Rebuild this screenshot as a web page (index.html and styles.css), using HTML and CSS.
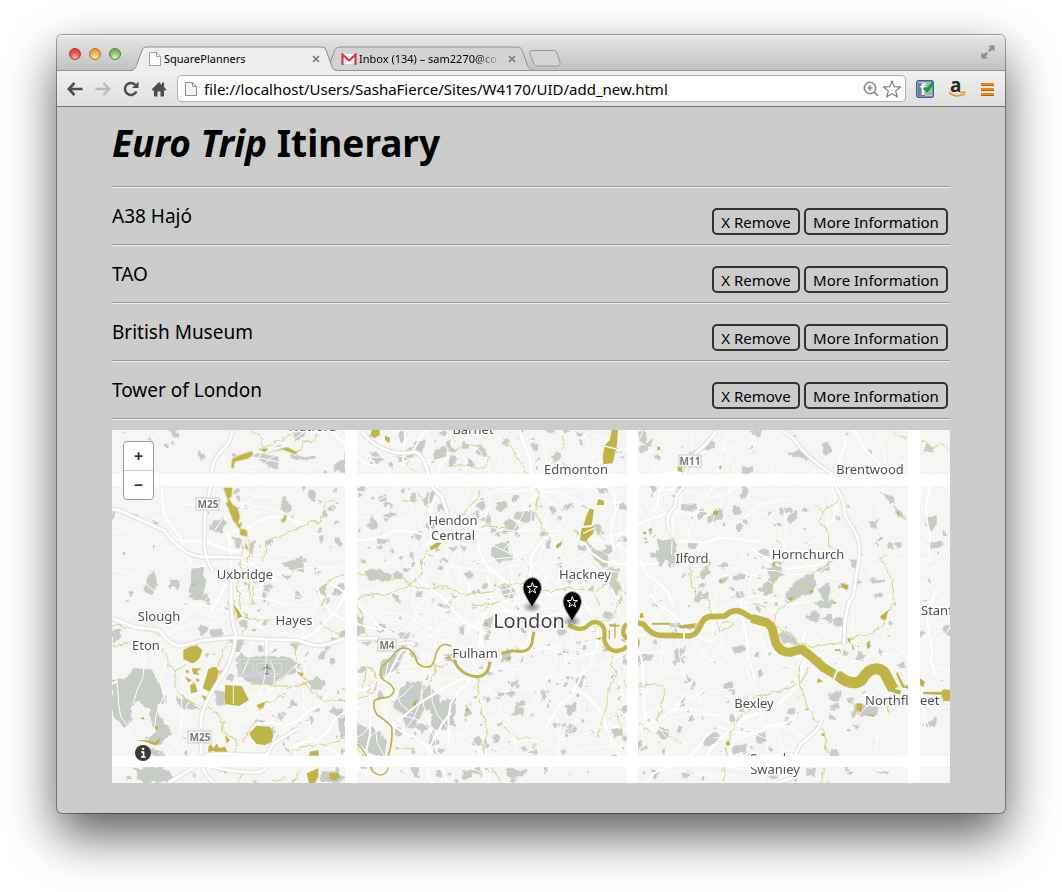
FILE: index.html
```
<!DOCTYPE html>
<html lang="en">
<head>
<meta charset="utf-8">
<title>SquarePlanners</title>
<link rel="stylesheet" href="styles.css">
</head>
<body>
<div class="window">
  <header class="tabstrip">
    <div class="lights">
      <button class="light light-red" aria-label="Close window"></button>
      <button class="light light-amber" aria-label="Minimise window"></button>
      <button class="light light-green" aria-label="Zoom window"></button>
    </div>
    <div class="tab tab-active">
      <svg class="tab-shape" viewBox="0 0 204 25" preserveAspectRatio="none"><path d="M0 25C4 23 4 20 5 18L10 4Q11 1 14 1H190Q193 1 194 4L199 18C200 21 200 23 204 25Z" fill="#eeeeee"/><path d="M0 24C4 23 4 20 5 18L10 4Q11 1 14 1H190Q193 1 194 4L199 18C200 21 200 23 204 24" fill="none" stroke="#8f8f8f"/></svg>
      <svg class="page-icon" viewBox="0 0 12 14"><path d="M.5.5H7.500L11.500 4.500V13.500H.5Z" fill="#fafafa" stroke="#a0a0a0"/><path d="M7.500.5V4.500H11.500" fill="none" stroke="#a0a0a0"/></svg>
      <span class="tab-title">SquarePlanners</span>
      <button class="tab-close" aria-label="Close tab"><svg viewBox="0 0 8 8"><path d="M1 1L7 7M7 1L1 7" stroke="#777" stroke-width="1.600"/></svg></button>
    </div>
    <div class="tab tab-back">
      <svg class="tab-shape" viewBox="0 0 204 25" preserveAspectRatio="none"><path d="M2 18L7 4Q8 1 11 1H188Q191 1 192 4L197 18C198 21 199 23 203 24H4Z" fill="#d3d3d3"/><path d="M0 17L5 4Q6 1 10 1H188Q191 1 192 4L197 18C198 21 199 23 203 24" fill="none" stroke="#939393"/></svg>
      <svg class="mail-icon" viewBox="0 0 16 12"><path d="M1 1H15V11H1Z" fill="#fff"/><path d="M1.500 12V1.500L8 7.500L14.500 1.500V12" fill="none" stroke="#d93a3a" stroke-width="2.200"/><path d="M3.500 11L6.500 7M12.500 11L9.500 7" stroke="#e8a9a6" stroke-width=".7"/></svg>
      <span class="tab-title tab-title-fade">Inbox (134) – sam2270@co</span>
      <button class="tab-close" aria-label="Close tab"><svg viewBox="0 0 8 8"><path d="M1 1L7 7M7 1L1 7" stroke="#777" stroke-width="1.600"/></svg></button>
    </div>
    <button class="new-tab" aria-label="New tab"><svg viewBox="0 0 32 17"><path d="M3 .5H25Q27 .5 28 3L31 12Q32 16 29 16H9Q6 16 5 14L1 4Q0 .5 3 .5Z" fill="#d5d5d5" stroke="#999"/></svg></button>
    <button class="fullscreen" aria-label="Full screen"><svg viewBox="0 0 15 15"><path d="M8 .5H14.500V7L12 4.800L9.300 7.500L7.500 5.700L10.200 3Z M.5 8L3 10.200L5.700 7.500L7.500 9.300L4.800 12L7 14.500H.5Z" fill="#8b8b8b"/></svg></button>
  </header>

  <nav class="toolbar">
    <button class="tool" aria-label="Back"><svg viewBox="0 0 16 16"><path d="M7.500 2L1.800 8L7.500 14M2 8H15.500" fill="none" stroke="#4d4d4d" stroke-width="2.600"/></svg></button>
    <button class="tool" aria-label="Forward"><svg viewBox="0 0 16 16"><path d="M8.500 2L14.200 8L8.500 14M14 8H.5" fill="none" stroke="#b9b9b9" stroke-width="2.400"/></svg></button>
    <button class="tool" aria-label="Reload"><svg viewBox="0 0 16 16"><path d="M12.500 4A6 6 0 1 0 13.400 10.500" fill="none" stroke="#4d4d4d" stroke-width="2.500"/><path d="M15.500 .5V7H9Z" fill="#4d4d4d"/></svg></button>
    <button class="tool" aria-label="Home"><svg viewBox="0 0 16 16"><path d="M8 1L.5 8.500L1.500 9.500H3V15.500H6.500V10.500H9.500V15.500H13V9.500H14.500L15.500 8.500L13 6V1.500H11V4Z" fill="#4d4d4d"/></svg></button>
    <form class="omnibox">
      <svg class="page-icon" viewBox="0 0 12 14"><path d="M.5.5H7.500L11.500 4.500V13.500H.5Z" fill="#f4f4f4" stroke="#8e8e8e"/><path d="M7.500.5V4.500H11.500" fill="none" stroke="#8e8e8e"/></svg>
      <input class="address" type="text" aria-label="Address" value="file://localhost/Users/SashaFierce/Sites/W4170/UID/add_new.html">
      <svg class="magnifier" viewBox="0 0 16 16"><circle cx="7" cy="7" r="5.700" fill="none" stroke="#8b8b8b" stroke-width="1.600"/><path d="M4.500 7H9.500M7 4.500V9.500M11 11L15 15" stroke="#8b8b8b" stroke-width="1.700"/></svg>
      <button class="star" type="button" aria-label="Bookmark"><svg viewBox="0 0 18 18"><path d="M9 1L11.300 6.600L17.300 7L12.700 10.900L14.200 16.800L9 13.600L3.800 16.800L5.300 10.900L.7 7L6.700 6.600Z" fill="#fff" stroke="#777" stroke-width="1.100"/></svg></button>
    </form>
    <button class="ext" aria-label="Extension"><svg viewBox="0 0 18 18"><rect x=".7" y=".7" width="16.600" height="16.600" rx="2" fill="#b9c8d6" stroke="#34619a" stroke-width="1.400"/><path d="M2 3H9V16H2Z" fill="#767f84"/><path d="M8 2H16V11L12 15H8Z" fill="#a9b6ad"/><text class="ext-letter" x="4" y="15">f</text><path d="M8 7.500L11 10.500L17 3" fill="none" stroke="#12993a" stroke-width="3"/><path d="M12 14L16 13" stroke="#7fc66d" stroke-width="2"/></svg></button>
    <button class="ext" aria-label="Amazon"><svg viewBox="0 0 18 18"><text class="amazon-letter" x="2" y="12">a</text><path d="M1 12.500Q8 18.500 15 14" fill="none" stroke="#f39a2b" stroke-width="2"/><path d="M12 12.500L17 12L15.500 16.500" fill="none" stroke="#f39a2b" stroke-width="1.300"/></svg></button>
    <button class="menu" aria-label="Menu"><svg viewBox="0 0 15 14"><path d="M1 2H14M1 7H14M1 12H14" stroke="#f5870f" stroke-width="2"/><path d="M1 3.500H14M1 8.500H14M1 13.500H14" stroke="#b65f0e" stroke-width="1"/></svg></button>
  </nav>

  <main class="page">
    <h1 class="title"><em>Euro Trip</em> Itinerary</h1>
    <hr class="rule">
    <section class="stop"><span class="stop-name">A38 Hajó</span><div class="actions"><button class="action">X Remove</button><button class="action action-wide">More Information</button></div></section>
    <hr class="rule">
    <section class="stop"><span class="stop-name">TAO</span><div class="actions"><button class="action">X Remove</button><button class="action action-wide">More Information</button></div></section>
    <hr class="rule">
    <section class="stop"><span class="stop-name">British Museum</span><div class="actions"><button class="action">X Remove</button><button class="action action-wide">More Information</button></div></section>
    <hr class="rule">
    <section class="stop"><span class="stop-name">Tower of London</span><div class="actions"><button class="action">X Remove</button><button class="action action-wide">More Information</button></div></section>
    <hr class="rule">

    <div class="map">
      <svg class="map-canvas" viewBox="112 430 838 353" preserveAspectRatio="xMidYMid slice" role="img" aria-label="Map of London">
        <defs>
          <filter id="rough" filterUnits="userSpaceOnUse" x="100" y="420" width="862" height="373"><feTurbulence type="fractalNoise" baseFrequency=".13" numOctaves="2" seed="4"/><feDisplacementMap in="SourceGraphic" scale="7" xChannelSelector="R" yChannelSelector="G"/></filter>
          <radialGradient id="pin-shadow"><stop offset="0" stop-color="#333" stop-opacity=".65"/><stop offset="1" stop-color="#555" stop-opacity="0"/></radialGradient>
          <g id="motorways">
            <g transform="translate(105 425) scale(.3333)"><path d="M382 15Q380 55 345 82Q320 110 320 148L315 190L300 270L298 360Q302 405 325 440M22 253Q50 255 70 268L180 318Q200 350 245 382Q280 400 325 395L410 398M378 470V540"/></g>
            <g transform="translate(105 600) scale(.3333)"><path d="M22 55L90 82Q130 85 165 92Q200 140 230 138L300 120L390 112L485 118L580 120Q630 145 670 132L720 115M378 0Q378 60 392 100Q390 160 360 215Q300 300 290 345L285 395L290 465M485 118V165M190 549L270 500Q290 465 320 462H380L485 466L505 430L580 385M292 500Q300 530 330 549M320 500Q380 515 440 518Q470 518 485 502"/></g>
            <g transform="translate(350 425) scale(.3333)"><path d="M38 20Q60 60 130 82Q160 88 195 80Q220 90 230 130L245 185L275 215L292 265"/></g>
            <g transform="translate(350 600) scale(.3333)"><path d="M22 115L80 115L110 135L180 128L195 135"/></g>
            <g transform="translate(630 425) scale(.3333)"><path d="M260 18L225 60Q180 90 165 145L160 190Q138 200 135 245Q112 265 112 290L118 315M460 18L490 40Q530 100 605 145L620 190Q645 230 645 270L680 330Q698 380 680 440L670 510L655 540"/></g>
            <g transform="translate(630 600) scale(.3333)"><path d="M658 0L645 60L642 130M575 360Q568 385 550 400L510 435L495 467M440 549L500 530"/></g>
          </g>
        </defs>
        <rect x="112" y="430" width="838" height="353" fill="#f5f5f4"/>
        <g filter="url(#rough)">
        <g id="minor-parks"></g>
        <g class="park">
          <g transform="translate(105 425) scale(.3333)">
            <path d="M190 14H215L208 42ZM273 92L285 78L298 86V102L283 106ZM445 92L470 85L495 92L520 94L518 132L490 128L470 108ZM550 90L590 95L632 92L635 100L570 104ZM562 24L600 17L595 38L575 46ZM695 120L720 85V145L690 138ZM530 215L560 240L550 262L532 245ZM612 200L625 192L632 205L630 228L615 222ZM325 290L358 278L360 300L350 322L312 316ZM20 258L30 262L24 288ZM85 265L100 268L92 280ZM138 280L160 290L150 298ZM380 330L405 340L410 370L392 368ZM432 345L450 345L440 395L432 380ZM535 415L590 398L600 435L565 440ZM262 430L295 425L298 490L290 525L258 520L258 460ZM130 445L150 435L158 480L140 512L120 500ZM192 465L228 465L222 495L196 485ZM70 500L85 498L82 512ZM630 495L662 482V510L640 505ZM640 335L655 335L652 352ZM532 450L560 450L545 468ZM570 495L595 512L575 525ZM695 345L715 350L708 366Z"/>
          </g>
          <g transform="translate(105 600) scale(.3333)">
            <path d="M22 240L60 235L85 205L140 210L160 245L182 305L155 310L160 350L200 395L165 432L120 415L155 395L140 360L135 330L100 305L75 325L80 360L60 380L22 345ZM125 450L142 445L180 467H140ZM90 505L170 500L203 530L190 549L115 547L95 530ZM395 170L545 170L570 185L570 210L500 258L440 252L400 230ZM325 270L355 275L358 312L335 310ZM215 290L245 300L285 328L240 330L215 305ZM315 90L350 88V112H315ZM380 125L420 120L410 155L385 152ZM610 245L635 232L660 250L650 270L620 262ZM22 90L48 90L45 115L22 125ZM515 340L540 330L540 355L525 360ZM672 335L690 322L715 335L700 350ZM700 355L720 345V420L705 410ZM450 365L478 360L475 372ZM645 518L700 512L720 540L700 549L650 540ZM400 65L425 52L430 78L410 80ZM556 115L585 120L578 155L562 145ZM458 135L470 138L470 150L457 152Z"/>
          </g>
          <g transform="translate(350 425) scale(.3333)">
            <path d="M135 90L175 75L200 50L228 48L215 80L190 90L150 112ZM250 72L285 68L290 92L258 100L245 118ZM375 75L395 62L410 75L405 95L385 92ZM540 55L565 60L560 78L545 72ZM62 85L80 80L98 105L75 110ZM440 235L468 230L472 245L455 262L440 252ZM495 265L520 258L555 265L550 285L520 290L495 278ZM85 215L110 210L108 230L88 228ZM195 320L213 315L210 350L198 345ZM425 370L450 350L475 360L478 385L500 398L485 408L460 405L448 412L425 395ZM45 440L75 432L125 450L120 465L55 465ZM455 490L480 482L495 495L490 525L470 522L455 508ZM645 235L665 235L655 260ZM590 345L605 348L600 368L588 365ZM700 340L740 375L775 395L775 425L745 410L720 385ZM780 430L805 435L800 465L812 490L795 510L785 480ZM270 400L300 405L298 412L275 412ZM85 340L118 350L105 360L85 355ZM60 505L90 502L85 512ZM330 360L350 368L345 378L330 372ZM675 20L705 18L700 28L680 28ZM130 445L155 445L155 460L135 460Z"/>
          </g>
          <g transform="translate(350 600) scale(.3333)">
            <path d="M92 178L125 172L145 142L168 148L155 180L125 225L95 235ZM142 285L165 250L180 245L230 255L270 295L265 315L220 335L190 385L170 382L155 340L133 325ZM245 325L275 305L318 290L312 375L288 390L245 382ZM22 370L50 385L100 410L110 435L105 465L75 468L22 430ZM395 62L425 55V88L397 82ZM455 160L485 155L482 182L455 188ZM475 245L505 242L490 262ZM575 265L595 275L580 295ZM497 310L517 310L518 348L483 345L495 332ZM345 318L362 328L360 345L342 350ZM645 318L680 310L675 332L650 328ZM785 385L815 382L818 408L790 412ZM820 165L831 162V192L820 190ZM148 98L178 95L175 115L150 115ZM195 380L215 370L240 382L215 395ZM535 455L560 447L558 465ZM185 505L205 505L212 540L195 530ZM335 515L375 508L360 535L340 535ZM465 505L525 512L515 530L475 530ZM680 240L700 235L695 260L682 255ZM285 165L318 160L322 190L290 185ZM630 150L658 148L655 162L620 165ZM240 410L262 425L255 440L240 428ZM22 45L40 60L45 95L22 105ZM265 15L300 5L305 20L285 25ZM652 380Q672 368 682 385Q675 402 658 395Z"/>
          </g>
          <g transform="translate(630 425) scale(.3333)">
            <path d="M25 20L42 18L55 55L30 50ZM28 62L52 62L52 80L32 82ZM225 60L245 45L255 60L230 80ZM362 18L395 15L390 32L370 34ZM478 85L510 75L540 95L535 105L510 92L480 92ZM578 60L595 55L602 80L590 90L578 82ZM340 125L368 125L365 145H340ZM155 235L200 238L198 255L155 258ZM232 285L260 255L280 258L278 278L235 295ZM325 215L350 185L358 200L335 225ZM330 185L350 185L355 200L335 200ZM448 255L480 245L485 258L455 268ZM478 270L498 280L485 295L475 285ZM612 272L630 272L628 288ZM720 290L740 290L740 305L722 308ZM755 205L780 230L795 232L790 215L770 210ZM793 245L825 268L825 280L800 275ZM890 280L915 275L920 295L905 318L888 305ZM888 350L942 350L942 362L900 372ZM888 65L910 62L905 80L890 80ZM82 345L130 345L140 365L138 415L90 405L58 390L85 380ZM178 350L200 350L195 370L178 372ZM210 440L230 425L240 445L215 458ZM425 410L455 410L460 450L440 465L415 512L395 490L420 455ZM470 495L510 465L530 445L545 445L560 480L540 505L500 520L480 540L465 530ZM560 440L605 408L598 430L570 445ZM570 490L595 475L600 500L590 540L575 515ZM625 480L655 475L655 495L630 490ZM665 405L688 405L682 425L665 425ZM722 462L760 460L765 468L725 472ZM738 505L752 505V520L738 520ZM312 450L345 450V465H312ZM265 462L290 460L285 475L265 475ZM318 500L340 505L338 520L320 515ZM385 375L415 375L418 395L385 392ZM715 75L725 78L722 88Z"/>
          </g>
          <g transform="translate(630 600) scale(.3333)">
            <path d="M540 35L560 30L575 48L560 68L540 60ZM612 58L638 55V75H615ZM555 5L605 0L600 25L570 20ZM450 90L500 120L508 132L460 130L445 105ZM120 70L200 75L198 88L125 82ZM135 150L168 142L140 195L130 180ZM25 165L42 160L70 170L45 180L25 195ZM305 145L340 135L350 150L315 160ZM385 220L395 208L402 225L385 232ZM282 248L308 245L308 275L285 268ZM592 280L635 275L630 300L600 300ZM670 310L740 320L742 345L710 348L675 335ZM598 342L620 348L620 360L598 360ZM220 420L250 398L265 405L250 432L220 440ZM85 385L115 390L118 410L95 418L82 400ZM385 400L408 392L405 430L380 425ZM310 435L350 432L350 455L310 460ZM148 300L163 290L163 318L148 322ZM190 250L200 255L178 268ZM150 515L188 520L180 530L155 532ZM478 328L492 325L490 342L475 342ZM600 315L625 308L632 320L605 330ZM668 375L690 378L685 390ZM65 510L90 512L80 535L68 530ZM940 85L960 75V110L945 105ZM740 515L780 520L775 525ZM530 505L560 505L555 530L530 525Z"/>
          </g>
        </g>
        </g>
        <g id="streets"></g>

        <g class="airfield" transform="translate(105 600) scale(.3333)">
          <path d="M400 178H550M400 228H530M405 180V228M415 190H445V220H420M455 190H530V220H458Z"/>
        </g>

        <g class="stream" filter="url(#rough)">
          <g transform="translate(105 425) scale(.3333)">
            <path d="M430 15L465 30L475 70L560 28M495 80L540 72L575 85L595 55L620 50L640 32M405 345L420 370L405 400L412 440L395 475L410 540M425 340L435 370L425 430L435 460L430 540M685 225L665 230L650 290H618L550 325L490 345L480 395L470 410M720 450L690 455L665 480L655 540M445 480L440 540"/>
          </g>
          <g transform="translate(105 600) scale(.3333)">
            <path d="M22 75L70 80L150 95L168 110M22 130L35 145L70 125M170 150L190 170L188 200L210 212L240 200M210 215V260L240 300L300 322L340 345L355 370L352 395L395 420V465M370 0L380 60L410 35M400 0L430 60L415 100L400 120M385 0L395 60M370 125L350 160L342 200M430 60L500 60L610 58M640 65L655 80L720 110M570 130L572 185L600 230L610 250L560 260L440 250M460 325L500 300L540 290M545 265L600 250L650 300L720 305M415 425L435 380L460 360M550 465L590 440L650 435L720 420M415 510L400 549M500 549L540 530M560 549L590 510"/>
          </g>
          <g transform="translate(350 425) scale(.3333)">
            <path d="M460 35L470 60L500 90L525 130L528 145M640 30L645 60L615 90L605 115M180 90L175 120L195 145M285 78L330 75L360 60L395 65L415 100L400 130L345 120L295 120M205 190L210 215L240 245M160 230L200 225M390 195L385 220L350 250L348 270M565 190L560 270L580 310L600 345M390 300L480 310M240 375L215 405V450L180 480L120 505L22 520M22 445L100 465L150 460L200 490L290 485L340 510L430 500L465 480L520 475L600 500L660 490L730 495L750 540M730 395L780 440L795 480L830 510M740 495L780 470L820 530"/>
          </g>
          <g transform="translate(350 600) scale(.3333)">
            <path d="M22 10L40 50L35 80L60 120L100 135M22 295L75 280L80 240L70 200L45 205L40 260M380 230L385 290L395 330L415 390L405 430L400 465M465 385L510 415L545 415M260 200L290 195M235 260L260 200M790 165L785 190L800 225L775 260L770 320L740 415M800 340L820 420M130 445L190 450L200 465M365 12L410 15L450 5M730 100L760 60L790 50L810 5M822 240L831 265M22 445L60 490L70 510M400 480L430 510L450 540M405 505L440 520"/>
          </g>
          <g transform="translate(630 425) scale(.3333)">
            <path d="M145 185L140 200M260 25L230 50L215 80L185 90L160 140M790 18L830 45M870 50L890 55L905 70L935 55L960 75M550 230L580 260L620 230M580 260L570 290L595 325L600 370M120 330L130 350L145 390M440 345L450 360M182 430L185 480L200 515L235 525M240 415L235 440L195 460M570 430L530 470L510 500L480 530M460 410L430 480L405 512M770 390L755 405L775 435L790 490L795 540M370 535L405 545"/>
          </g>
          <g transform="translate(630 600) scale(.3333)">
            <path d="M235 5L245 40M430 70L435 40L480 5M430 75L490 110L500 125L555 140L640 125L700 105L760 80L770 40L795 0M520 180L505 215L510 260L535 330L560 360L585 400V430L590 465M535 200L520 240L470 270L370 290M365 320L330 350L305 395L295 430L290 465M25 260L60 250L100 260L100 290L85 365M25 370L60 395M100 390L150 435M580 505L575 549M265 65L270 95L310 75L295 62L275 70M820 260L870 245M775 345L770 310L800 285M25 440L45 450M290 500L280 549"/>
          </g>
        </g>

        <g class="lake">
          <g transform="translate(105 425) scale(.3333)">
            <path d="M382 100L400 92L440 78L445 88L430 100L390 110L385 130L378 128ZM525 72L550 68L578 82L572 88L550 80ZM355 188H382L380 215L372 220L384 240L398 250L405 275L398 300L386 290L372 258L368 225ZM405 310L425 315L428 335L405 330ZM540 268L546 272L538 294L530 288ZM420 350L430 370L422 375ZM262 480L272 472L268 482ZM460 72L490 70L480 82ZM375 225L370 250L362 235ZM392 300L412 292L405 312Z"/>
          </g>
          <g transform="translate(105 600) scale(.3333)">
            <path d="M235 150Q255 138 275 136L292 150L285 172Q272 188 262 190L235 178ZM310 208Q325 198 335 203L342 215L330 255L318 277L293 265ZM360 255L410 258L432 300L402 318L360 312ZM433 400L455 377L495 380L505 405L500 425L480 435L455 432L440 415ZM605 520L640 505L640 530L630 549H612ZM672 520L700 518L705 532L690 542L675 538ZM240 230L260 240L250 248ZM260 205L290 205L275 215L285 225L265 222ZM255 255L270 250L278 275L258 280ZM290 285L308 292L300 305ZM240 212L252 210L248 222ZM272 235L286 240L276 247ZM105 355L115 350L118 360ZM90 420L120 420L150 426L168 412L158 434L150 436L120 425ZM148 378L160 382L155 392ZM310 440L318 432L325 445L335 430L342 444L360 440L370 460L350 455L340 465L325 452L310 458ZM455 315L480 305L475 325H460ZM615 455L640 450L642 467H612ZM360 405L375 420L365 430ZM385 15L400 30L412 50L400 55ZM340 505L375 510L360 520ZM575 215L595 220L590 232Z"/>
            <path d="M385 255V312" stroke="#f5f5f4" stroke-width="3"/>
          </g>
          <g transform="translate(350 425) scale(.3333)">
            <path d="M65 14H88L90 30L72 40L62 30ZM105 32L120 38L118 55L105 45ZM785 15H804L800 65L788 115L760 118L758 95L765 60L780 45ZM745 222L762 228V240H740ZM720 250L732 255L725 300L700 302L710 270ZM695 310L732 305L730 325L705 350L690 345ZM240 365L262 352L275 355L260 370L242 376ZM618 360L638 348L632 362L620 372Z"/>
            <path d="M760 62L798 72M700 325L735 308" stroke="#f5f5f4" stroke-width="4"/>
          </g>
          <g transform="translate(350 600) scale(.3333)">
            <path d="M190 305L202 297L198 315L188 318ZM345 325L358 328L352 338ZM402 70L412 68V78ZM285 172L300 168L302 178ZM465 175L482 170L480 180ZM778 72L808 75V80H780ZM735 115L755 112L750 120Z"/>
          </g>
          <g transform="translate(630 425) scale(.3333)">
            <path d="M142 125L157 125L155 142L143 138ZM250 258L268 258L262 272L252 270ZM268 122H274V132H268ZM82 65H90V75H82ZM630 475L655 480L655 492H642ZM802 260H808V270H802ZM428 412H436V422H428ZM268 465H278V472H268ZM540 495H550V503H540ZM40 320H48V328H40ZM58 310H66V318H58ZM610 530H618V536H610ZM472 520L492 515L482 530Z"/>
          </g>
          <g transform="translate(630 600) scale(.3333)">
            <path d="M65 68H120V74H65ZM140 78L195 70L192 85L150 84ZM652 115H660L662 130L655 125ZM665 128L674 148L668 150ZM710 130L718 120L722 140L712 148ZM750 50L775 30L768 60L755 58ZM680 312L697 310L695 335L680 330ZM705 342L735 345L730 350ZM565 235L580 245L560 248ZM615 148H630V153H615ZM878 276L935 275L940 268L960 270V303H940L935 285L880 282ZM802 215L825 262L818 265L798 220ZM820 262L834 255V267ZM870 235L885 245L880 262L870 255ZM288 425H300V435H288ZM575 400H583V408H575ZM24 112Q34 128 24 145ZM30 40H40V54H30Z"/>
          </g>
        </g>

        <g class="thames">
          <g transform="translate(350 600) scale(.3333)">
            <path stroke-width="5" d="M115 467Q130 420 125 380Q100 355 82 345Q65 320 75 300Q90 292 110 292Q130 288 132 270Q125 250 100 240Q85 220 95 200Q120 180 135 160Q150 140 175 146Q195 160 200 185Q215 205 240 200Q252 195 258 160Q270 130 290 134L305 138"/>
            <path stroke-width="9" d="M312 180Q330 225 380 230Q415 230 420 185M455 160L490 152Q545 165 548 115L552 95"/>
            <path stroke-width="13" d="M655 75Q690 95 710 80Q735 55 755 75Q768 85 762 120Q775 155 800 153Q825 150 831 138M831 72Q818 82 820 102L831 118"/>
            <path stroke-width="4" d="M22 432Q55 465 60 500Q70 525 95 525Q112 520 115 502M778 90V118M795 70V115"/>
          </g>
          <g transform="translate(630 600) scale(.3333)">
            <path stroke-width="17" d="M18 68L40 72Q65 108 95 106L180 108Q200 105 212 75Q225 45 250 50L285 48Q315 20 345 42L372 58"/>
            <path stroke-width="27" d="M365 55L410 68Q428 78 430 100L438 130Q450 158 480 157L515 147L550 175L580 202L630 232"/>
            <path stroke-width="33" d="M622 225Q665 262 695 240Q715 205 740 206Q762 208 770 230L790 268"/>
            <path stroke-width="12" d="M780 268L812 278"/>
          </g>
        </g>

        <use class="road-edge" href="#motorways"/>
        <use class="road" href="#motorways"/>
        <g class="bridge"><path d="M838 669Q843 655 843 643M833 681Q835 675 838 669M684 633V642"/></g>

        <g class="shield">
          <rect x="196" y="498" width="23" height="12"/><text x="208" y="508">M25</text>
          <rect x="188" y="731" width="23" height="12"/><text x="200" y="741">M25</text>
          <rect x="378" y="639" width="18" height="12"/><text x="387" y="649">M4</text>
          <rect x="679" y="455" width="22" height="12"/><text x="690" y="465">M11</text>
        </g>
        <g class="place">
          <text x="312" y="431">Watford</text>
          <text x="473" y="434">Barnet</text>
          <text x="576" y="474">Edmonton</text>
          <text x="870" y="474">Brentwood</text>
          <text x="453" y="525">Hendon</text>
          <text x="453" y="540">Central</text>
          <text x="245" y="579">Uxbridge</text>
          <text x="585" y="579">Hackney</text>
          <text x="692" y="563">Ilford</text>
          <text x="808" y="559">Hornchurch</text>
          <text x="159" y="621">Slough</text>
          <text x="294" y="625">Hayes</text>
          <text x="146" y="650">Eton</text>
          <text x="475" y="658">Fulham</text>
          <text x="754" y="708">Bexley</text>
          <text class="from-left" x="865" y="705">Northfl</text>
          <text class="place-city" x="529" y="628">London</text>
        </g>
        <g fill="#fff">
          <rect x="112" y="474" width="838" height="12"/>
          <rect x="112" y="756" width="838" height="11"/>
          <rect x="345" y="430" width="12" height="353"/>
          <rect x="627" y="430" width="11" height="353"/>
          <rect x="908" y="430" width="12" height="353"/>
        </g>
        <g class="place">
          <text class="from-left" x="920" y="705">eet</text>
          <text class="from-left" x="921" y="615">Stanford</text>
          <svg x="740" y="767" width="80" height="16" viewBox="740 767 80 16"><text x="775" y="774">Swanley</text></svg>
          <svg x="740" y="745" width="80" height="11" viewBox="740 745 80 11"><text x="775" y="763">Swanley</text></svg>
          <svg x="530" y="486" width="90" height="3" viewBox="530 486 90 3"><text x="576" y="486">Edmonton</text></svg>
        </g>
        <path d="M267 664V674M263 669L267 667L271 669M265 674H269" fill="none" stroke="#777" stroke-width="1"/>
        <g id="pin">
          <ellipse cx="532" cy="607" rx="10" ry="6" fill="url(#pin-shadow)"/>
          <path d="M532 608C529 600 523 595 523 587A9.300 10.500 0 0 1 541.500 587C541.500 595 535 600 532 608Z" fill="#000" stroke="#aaa" stroke-width="1"/>
          <path d="M532.300 582.500L533.600 586.500H537.500L534.400 589L535.600 593L532.300 590.600L529 593L530.200 589L527.100 586.500H531Z" fill="none" stroke="#fff" stroke-width="1"/>
        </g>
        <use href="#pin" transform="translate(40 14)"/>
      </svg>
      <div class="zoom"><button class="zoom-button" aria-label="Zoom in">+</button><button class="zoom-button" aria-label="Zoom out">−</button></div>
      <button class="info" aria-label="Map information"><svg viewBox="0 0 16 16"><circle cx="8" cy="8" r="8" fill="#3b3b3b"/><path d="M6 7H8.500V12M6 12H10.500" fill="none" stroke="#fff" stroke-width="1.700"/><circle cx="8" cy="4" r="1.300" fill="#fff"/></svg></button>
    </div>
  </main>
</div>
<script src="map.js"></script>
</body>
</html>
```
FILE: styles.css
```
* { box-sizing: border-box; }
body { margin: 0; padding: 35px 57px 79px; background: #fff; color: #000; font-family: "Noto Sans", "Open Sans", sans-serif; }
button { margin: 0; padding: 0; border: 0; background: none; color: inherit; font-family: inherit; }
svg { display: block; }

.window { border-radius: 5px; background: #ccc; box-shadow: 0 0 0 1px rgba(0, 0, 0, .35), 0 22px 50px rgba(0, 0, 0, .65); }

.tabstrip { display: flex; height: 36px; align-items: flex-end; padding: 0 10px 0 12px; border-top: 1px solid #f8f8f8; border-bottom: 1px solid #949494; border-radius: 5px 5px 0 0; background: linear-gradient(#e6e6e6, #c2c2c2); }
.lights { display: flex; gap: 8px; margin: 0 11px 10px 0; }
.light { width: 12px; height: 12px; border: 1px solid; border-radius: 50%; }
.light-red { border-color: #a23c3c; background: radial-gradient(circle at 50% 85%, #ffb9b0, #f0504f 50%, #d8343a); }
.light-amber { border-color: #a87732; background: radial-gradient(circle at 50% 85%, #fff0ae, #f5b050 50%, #dc8e34); }
.light-green { border-color: #4d8341; background: radial-gradient(circle at 50% 85%, #e0ffc9, #85c56e 50%, #5da151); }
.tab { position: relative; display: flex; width: 204px; height: 25px; margin-bottom: -1px; align-items: center; padding: 0 16px 0 17px; }
.tab-active { z-index: 1; }
.tab-back { margin-left: -6px; padding: 0 18px 0 11px; }
.tab-shape { position: absolute; inset: 0; width: 100%; height: 25px; }
.tab .page-icon, .mail-icon, .tab-title, .tab-close { position: relative; }
.page-icon { flex: none; width: 12px; height: 14px; }
.mail-icon { flex: none; width: 16px; height: 12px; }
.tab-title { flex: 1; min-width: 0; overflow: hidden; margin-left: 3px; font-size: 11px; line-height: 16px; white-space: nowrap; }
.tab-title-fade { margin: 0 5px 0 2px; -webkit-mask-image: linear-gradient(90deg, #000 80%, transparent); mask-image: linear-gradient(90deg, #000 80%, transparent); }
.tab-close svg { width: 8px; height: 8px; }
.new-tab { margin: 0 auto 3px -5px; }
.new-tab svg { width: 32px; height: 17px; }
.fullscreen { margin-bottom: 11px; }
.fullscreen svg { width: 14px; height: 14px; }

.toolbar { display: flex; height: 36px; align-items: center; padding: 0 10px; border-bottom: 1px solid #777; background: linear-gradient(#f0f0f0, #dfdfdf); }
.tool { flex: none; margin-right: 12px; }
.tool svg { width: 16px; height: 16px; }
.omnibox { display: flex; flex: 1; min-width: 0; height: 27px; align-items: center; gap: 4px; margin: 0 10px 0 -2px; padding: 0 4px 0 7px; border: 1px solid #b0b0b0; border-radius: 4px; background: #fff; }
.address { flex: 1; min-width: 0; padding: 0 3px; border: 0; outline: 0; background: none; font: 15px/20px "Noto Sans", sans-serif; color: #000; }
.magnifier { width: 16px; height: 16px; }
.star svg { width: 18px; height: 18px; }
.ext { flex: none; margin-right: 14px; }
.ext svg { width: 18px; height: 18px; }
.ext-letter { fill: #fff; font: bold 17px "Liberation Sans", sans-serif; }
.amazon-letter { fill: #2b2b2b; font: bold 19px "Noto Sans", sans-serif; }
.menu svg { width: 15px; height: 14px; }

.page { padding: 12px 55px 30px; }
.title { margin: 0 0 19px; font-size: 37px; line-height: 48px; }
.rule { height: 2px; margin: 0; border: 0; border-top: 1px solid #999; border-bottom: 1px solid #eee; }
.stop { display: flex; align-items: flex-start; justify-content: space-between; padding: 14px 2px 9px 0; }
.stop-name { font-size: 19px; line-height: 28px; }
.actions { display: flex; gap: 4px; margin-top: 6px; }
.action { width: 88px; height: 27px; border: 2px solid #333; border-radius: 5px; font-size: 15px; line-height: 22px; white-space: nowrap; }
.action-wide { width: 144px; }

.map { position: relative; margin-top: 10px; }
.map-canvas { width: 100%; height: 353px; }
.park, .minor-park { fill: #c7ccc6; stroke: #c7ccc6; stroke-linejoin: round; stroke-width: 2; }
.minor-park { stroke-width: 0; }
.street { fill: none; stroke: #fff; stroke-width: 1; }
.street-main { stroke-width: 2; }
.airfield { fill: none; stroke: #d9dfd8; stroke-width: 3; }
.stream { fill: none; stroke: #d6cf83; stroke-width: 3; stroke-linejoin: round; }
.lake { fill: #c0b447; }
.thames { fill: none; stroke: #c0b447; stroke-linejoin: round; }
.road-edge { fill: none; stroke: #dadada; stroke-width: 14; stroke-linejoin: round; }
.road { fill: none; stroke: #fff; stroke-width: 9; stroke-linejoin: round; }
.bridge { fill: none; stroke: #f5f5f4; stroke-width: 2; }
.shield rect { fill: #fff; stroke: #c9c9c2; }
.shield text { fill: #777; font: bold 10px "Noto Sans", sans-serif; text-anchor: middle; }
.place { fill: #505050; stroke: #fff; stroke-width: 3; stroke-linejoin: round; paint-order: stroke; font: 13px "Noto Sans", sans-serif; text-anchor: middle; }
.place .from-left { text-anchor: start; }
.place .place-city { fill: #444; font-size: 20px; }
.zoom { position: absolute; top: 11px; left: 11px; width: 31px; overflow: hidden; border: 1px solid #999; border-radius: 4px; background: #fff; }
.zoom-button { display: block; width: 100%; height: 28px; color: #333; font: bold 16px/28px "Noto Sans", sans-serif; }
.zoom-button + .zoom-button { height: 29px; border-top: 1px solid #ccc; }
.info { position: absolute; bottom: 22px; left: 23px; }
.info svg { width: 16px; height: 16px; }
```
FILE: map.js
```
(function () {
  var NS = 'http://www.w3.org/2000/svg';
  var seed = 41;

  function rand() {
    seed = (seed * 1103515245 + 12345) % 2147483648;
    return seed / 2147483648;
  }

  function add(layerId, className, d) {
    var path = document.createElementNS(NS, 'path');
    path.setAttribute('class', className);
    path.setAttribute('d', d);
    document.getElementById(layerId).appendChild(path);
  }

  // x, y, width, height, number of parks, number of streets
  var areas = [
    [112, 430, 233, 170, 30, 16],
    [225, 486, 120, 270, 65, 18],
    [112, 600, 233, 183, 40, 22],
    [357, 430, 270, 44, 45, 20],
    [357, 486, 270, 135, 150, 60],
    [357, 621, 270, 162, 150, 65],
    [638, 430, 270, 44, 10, 8],
    [638, 486, 140, 130, 60, 30],
    [778, 486, 130, 130, 18, 12],
    [638, 616, 270, 167, 90, 45],
    [920, 430, 30, 353, 12, 10]
  ];

  areas.forEach(function (a) {
    var parks = '';
    for (var i = 0; i < a[4]; i++) {
      var cx = a[0] + rand() * a[2];
      var cy = a[1] + rand() * a[3];
      var r = 1 + rand() * rand() * 5;
      var n = 4 + Math.floor(rand() * 4);
      for (var k = 0; k < n; k++) {
        var t = k / n * Math.PI * 2;
        var q = r * (0.5 + rand());
        parks += (k ? 'L' : 'M') + (cx + Math.cos(t) * q).toFixed(1) + ' ' + (cy + Math.sin(t) * q).toFixed(1);
      }
      parks += 'Z';
    }
    add('minor-parks', 'minor-park', parks);
  });

  areas.forEach(function (a) {
    for (var i = 0; i < a[5]; i++) {
      var x = a[0] + rand() * a[2];
      var y = a[1] + rand() * a[3];
      var t = rand() * Math.PI * 2;
      var d = 'M' + x.toFixed(1) + ' ' + y.toFixed(1);
      for (var k = 0; k < 6; k++) {
        t += (rand() - 0.5) * 1.1;
        x += Math.cos(t) * 14;
        y += Math.sin(t) * 14;
        d += 'L' + x.toFixed(1) + ' ' + y.toFixed(1);
      }
      add('streets', i % 6 ? 'street' : 'street street-main', d);
    }
  });
})();
```
